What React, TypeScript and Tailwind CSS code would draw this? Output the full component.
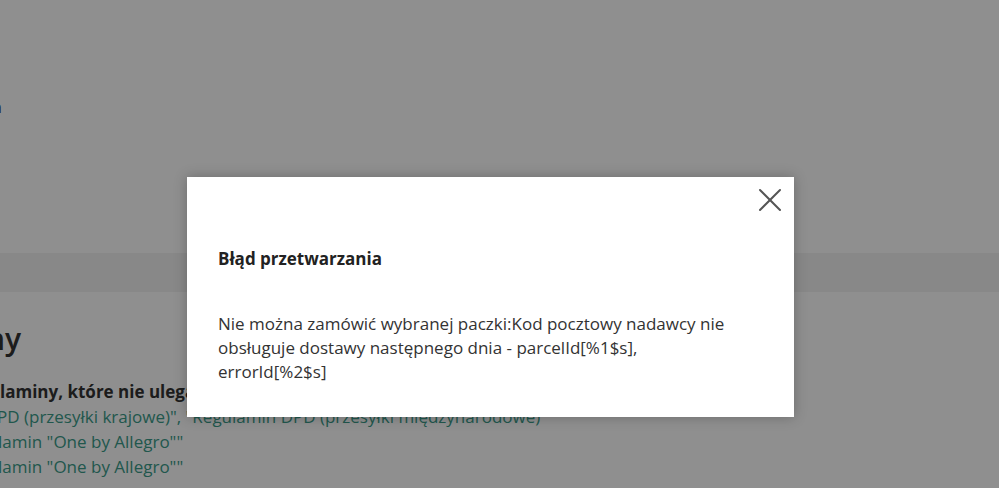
import { X } from 'lucide-react'

export default function App() {
  return (
    <div
      className="relative w-[999px] h-[488px] overflow-hidden bg-white text-[#333]"
      style={{ fontFamily: '"Open Sans", "Noto Sans", sans-serif' }}
    >
      {/* strona pod spodem */}
      <div className="h-[253px] pt-[95px]">
        <p className="-ml-[8px] text-[16px] leading-[24px] text-[#333]">n</p>
      </div>
      <div className="h-[39px] bg-[#f2f2f2]" />
      <div className="pt-[27px]">
        <h2 className="-ml-[14px] text-[30px] leading-[40px] font-semibold text-[#333]">ny</h2>
        <p className="mt-[20px] text-[17px] leading-[26px] font-bold text-[#333] whitespace-nowrap">
          laminy, które nie ulegają zmianie
        </p>
        <p className="-ml-[3px] text-[17px] leading-[24px] text-[#3b9c8a] whitespace-nowrap">
          PD (przesyłki krajowe)", "Regulamin DPD (przesyłki międzynarodowe)"
        </p>
        <p className="-ml-[2px] text-[17px] leading-[25px] text-[#3b9c8a] whitespace-nowrap">
          lamin "One by Allegro""
        </p>
        <p className="-ml-[2px] text-[17px] leading-[26px] text-[#3b9c8a] whitespace-nowrap">
          lamin "One by Allegro""
        </p>
      </div>

      {/* nakładka */}
      <div className="absolute inset-0 bg-black/[0.44]" />

      {/* okno dialogowe */}
      <div className="absolute left-[187px] top-[177px] w-[607px] h-[240px] bg-white shadow-[0_0_12px_rgba(0,0,0,0.25)] pl-[31px] pr-[56px] pt-[70px]">
        <button className="absolute right-[4px] top-[3px] text-[#555]">
          <X size={40} strokeWidth={1.2} />
        </button>
        <h3 className="text-[17px] leading-[24px] font-bold text-[#222]">Błąd przetwarzania</h3>
        <p className="mt-[41px] text-[17px] leading-[24px] text-[#333]">
          Nie można zamówić wybranej paczki:Kod pocztowy nadawcy nie obsługuje dostawy następnego dnia - parcelId[%1$s], errorId[%2$s]
        </p>
      </div>
    </div>
  )
}
